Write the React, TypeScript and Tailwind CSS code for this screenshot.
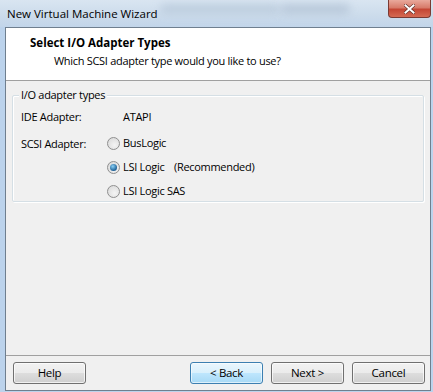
import React from "react"

function Radio({ checked }: { checked?: boolean }) {
  return (
    <span className="relative w-[13px] h-[13px] rounded-full border border-[#8f8f8f] bg-[radial-gradient(circle_at_60%_65%,#f4f4f4,#d6d6d6)] flex items-center justify-center shrink-0">
      {checked && (
        <span className="w-[7px] h-[7px] rounded-full bg-[radial-gradient(circle_at_40%_35%,#8ad0f5,#1c5f95_70%)]" />
      )}
    </span>
  )
}

function WinButton({ label, isDefault }: { label: string; isDefault?: boolean }) {
  return (
    <button
      className={
        isDefault
          ? "w-[73px] h-[22px] rounded-[3px] border border-[#3c7fb1] bg-[linear-gradient(#eaf6fd_0%,#d9f0fc_50%,#bee6fd_51%,#a7d9f5_100%)] text-[11.5px] text-black shadow-[inset_0_0_0_1px_#ffffff99]"
          : "w-[73px] h-[22px] rounded-[3px] border border-[#707070] bg-[linear-gradient(#f2f2f2_0%,#ebebeb_50%,#dddddd_51%,#cfcfcf_100%)] text-[11.5px] text-black shadow-[inset_0_0_0_1px_#ffffffb0]"
      }
    >
      {label}
    </button>
  )
}

export default function App() {
  return (
    <div className="w-[433px] h-[392px] flex flex-col bg-[#bcd3ec] overflow-hidden font-['Open_Sans','Noto_Sans',sans-serif] text-[11px] tracking-[-0.3px] text-black">
      {/* Title bar */}
      <div className="relative h-[27px] shrink-0 bg-[linear-gradient(180deg,#d9e5f1_0%,#cbdbeb_60%,#c2d5ea_100%)]">
        <div className="absolute left-[160px] top-[4px] w-[120px] h-[10px] rounded-full bg-[#b5c6d8] blur-[4px] opacity-70" />
        <div className="absolute left-[280px] top-[4px] w-[70px] h-[10px] rounded-full bg-[#aebfd2] blur-[4px] opacity-70" />
        <span className="absolute left-[7px] top-[5px] text-[11.5px] tracking-normal text-black">New Virtual Machine Wizard</span>
        <div className="absolute right-[2px] top-0 w-[43px] h-[18px] rounded-b-[4px] border border-t-0 border-[#7a3a33] bg-[linear-gradient(#e9a99c_0%,#d77b6a_45%,#c44634_55%,#d56a53_100%)] flex items-center justify-center">
          <svg width="11" height="10" viewBox="0 0 11 10">
            <path d="M1.5 1.5 L9.5 8.5 M9.5 1.5 L1.5 8.5" stroke="#5a2a24" strokeWidth="3.2" strokeLinecap="square" />
            <path d="M1.5 1.5 L9.5 8.5 M9.5 1.5 L1.5 8.5" stroke="#ffffff" strokeWidth="2" strokeLinecap="square" />
          </svg>
        </div>
      </div>

      {/* Window client area */}
      <div className="flex-1 ml-[5px] mr-[2px] mb-[1px] border border-[#6f7f8f] bg-[#f0f0f0] flex flex-col">
        {/* Header */}
        <div className="h-[53px] shrink-0 bg-white border-b border-[#a0a0a0] pl-[24px] pt-[6px]">
          <div className="font-bold text-[11.5px] tracking-normal leading-[18px]">Select I/O Adapter Types</div>
          <div className="pl-[24px] leading-[18px]">Which SCSI adapter type would you like to use?</div>
        </div>

        {/* Body */}
        <div className="flex-1 px-[6px] pt-[14px]">
          <div className="relative h-[107px] border border-[#d5dfe5] shadow-[inset_1px_1px_0_#ffffff,1px_1px_0_#ffffff] rounded-[2px] pl-[8px] pt-[13px]">
            <span className="absolute left-[6px] -top-[9px] px-[2px] bg-[#f0f0f0] leading-[16px]">I/O adapter types</span>
            <div className="flex items-center h-[17px]">
              <span className="w-[102px]">IDE Adapter:</span>
              <span>ATAPI</span>
            </div>
            <div className="flex mt-[9px]">
              <span className="w-[86px] leading-[17px]">SCSI Adapter:</span>
              <div className="flex flex-col gap-[7px]">
                <label className="flex items-center gap-[3px] h-[17px]">
                  <Radio />
                  <span>BusLogic</span>
                </label>
                <label className="flex items-center gap-[3px] h-[17px]">
                  <Radio checked />
                  <span className="w-[48px]">LSI Logic</span>
                  <span>(Recommended)</span>
                </label>
                <label className="flex items-center gap-[3px] h-[17px]">
                  <Radio />
                  <span>LSI Logic SAS</span>
                </label>
              </div>
            </div>
          </div>
        </div>

        {/* Footer */}
        <div className="h-[35px] shrink-0 border-t border-[#a0a0a0] flex items-center pl-[7px] pr-[5px]">
          <WinButton label="Help" />
          <div className="flex-1" />
          <div className="flex gap-[8px]">
            <WinButton label="< Back" isDefault />
            <WinButton label="Next >" />
            <WinButton label="Cancel" />
          </div>
        </div>
      </div>
    </div>
  )
}
